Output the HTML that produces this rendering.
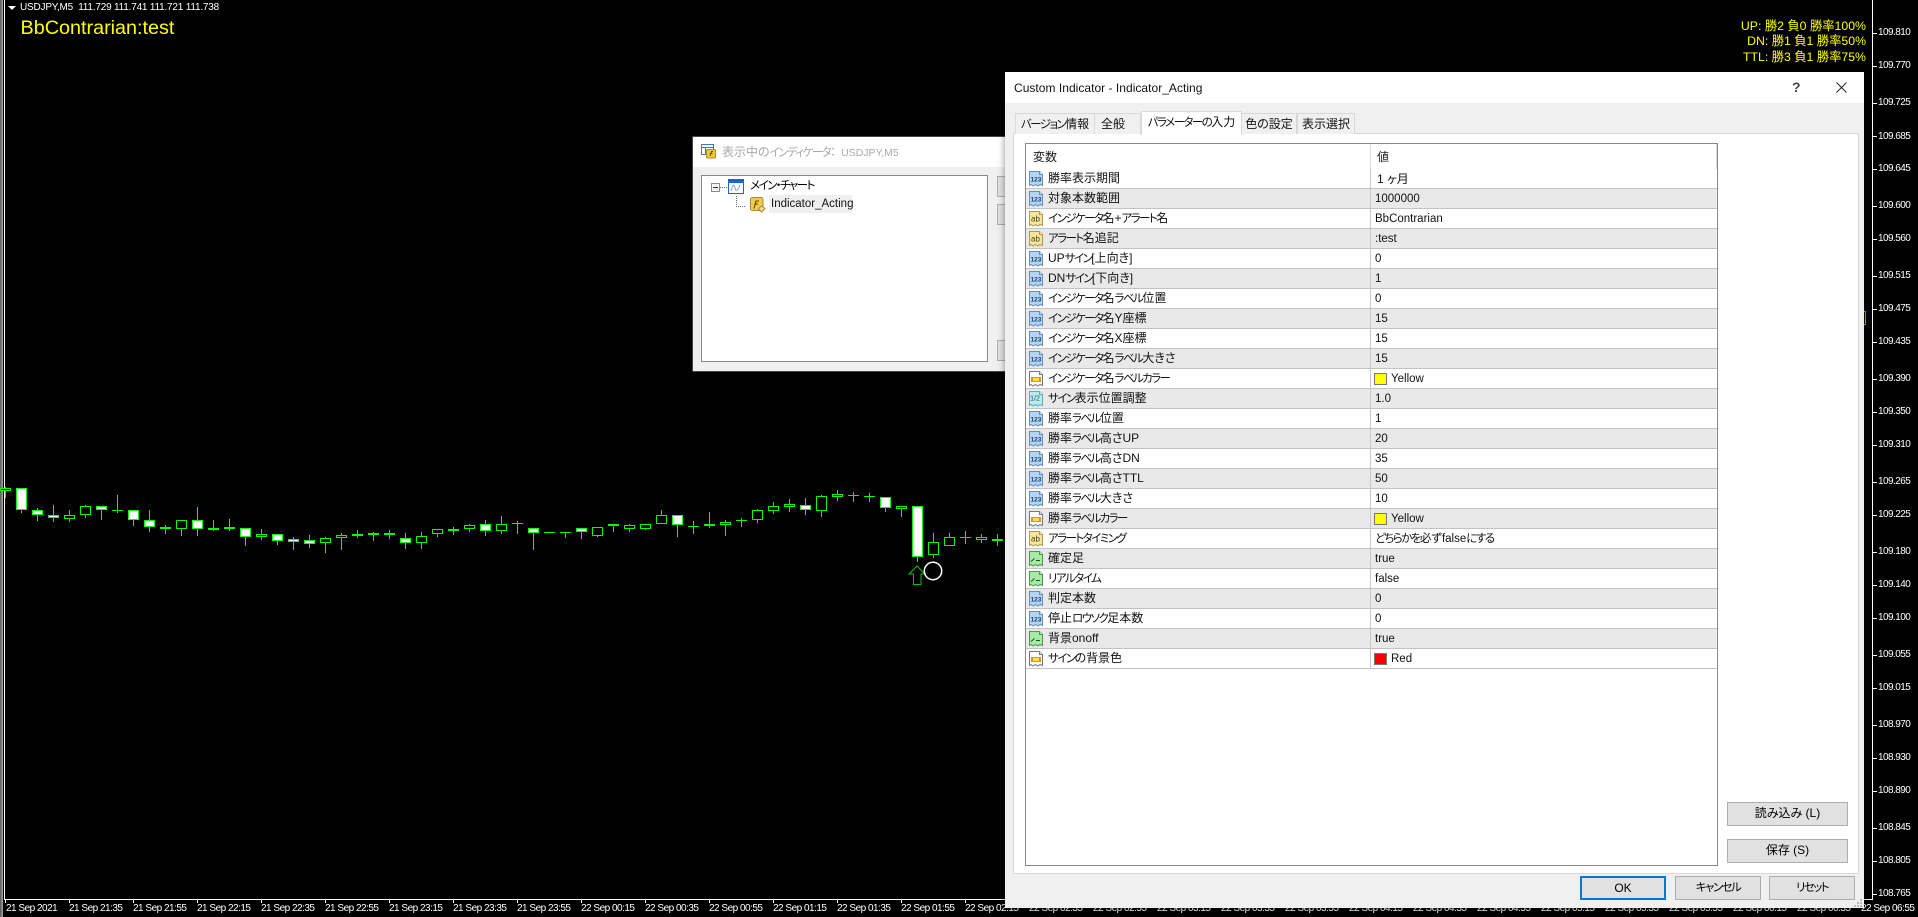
<!DOCTYPE html>
<html lang="ja"><head><meta charset="utf-8"><title>Custom Indicator</title>
<style>
*{box-sizing:border-box}
html,body{margin:0;padding:0;width:1918px;height:917px;overflow:hidden;background:#000}
body{position:relative;font-family:"Liberation Sans","Noto Sans CJK JP",sans-serif;font-feature-settings:"palt";font-size:12px;color:#000}
em{font-style:normal;font-size:11.5px;letter-spacing:-1.54px}
.a{position:absolute;white-space:nowrap}
.p{position:absolute;left:1878px;color:#fff;font-size:10px;line-height:12px;letter-spacing:-.55px;white-space:nowrap}
.t{position:absolute;top:903px;color:#fff;font-size:10px;line-height:12px;letter-spacing:-.5px;white-space:nowrap}
.tab{position:absolute;top:113px;height:21px;line-height:20px;text-align:center;background:#f0f0f0;border:1px solid #d9d9d9;border-bottom:0;color:#111;white-space:nowrap}
.btn{position:absolute;background:#e1e1e1;border:1px solid #adadad;text-align:center;color:#000;line-height:21px;white-space:nowrap}
.r{position:relative;height:20px;border-bottom:1px solid #c2c2c2;background:#fff;line-height:19px;width:691px}
.r.g{background:#e9e9e9}
.r svg{position:absolute;left:2px;top:2px;width:16px;height:16px}
.r b{position:absolute;left:22px;top:0;font-weight:400;color:#111;white-space:nowrap}
.r i{position:absolute;left:349px;top:1px;font-style:normal;font-size:11.5px;color:#111;white-space:nowrap}
.r u{position:absolute;left:348px;top:4px;width:13px;height:12px;border:1px solid #777}
.r i.c{left:365px}
.r::after{content:"";position:absolute;left:344px;top:0;width:1px;height:19px;background:#c8c8c8}
</style></head><body>

<svg width="0" height="0" style="position:absolute"><defs>
<symbol id="b" viewBox="0 0 16 16"><path d="M1.5.5H11.5L14.5 3.5V14.5L12 13.5 10 15 7.5 13.5 5 15 3 13.5 1.5 14.5Z" fill="#b7d5f2" stroke="#5f8fbf"/><path d="M11.5.5V3.5H14.5" fill="#e5f1fb" stroke="#5f8fbf"/><text x="8" y="10.5" font-size="6.5" font-weight="700" text-anchor="middle" fill="#17406d" font-family="Liberation Sans">123</text></symbol>
<symbol id="y" viewBox="0 0 16 16"><path d="M1.5.5H11.5L14.5 3.5V14.5L12 13.5 10 15 7.5 13.5 5 15 3 13.5 1.5 14.5Z" fill="#f3e6a0" stroke="#b09a4a"/><path d="M11.5.5V3.5H14.5" fill="#fbf5d2" stroke="#b09a4a"/><text x="7.5" y="10.5" font-size="8" text-anchor="middle" fill="#4a3c08" font-family="Liberation Sans">ab</text></symbol>
<symbol id="l" viewBox="0 0 16 16"><path d="M1.5.5H11.5L14.5 3.5V14.5L12 13.5 10 15 7.5 13.5 5 15 3 13.5 1.5 14.5Z" fill="#a9e9a9" stroke="#4a9a4a"/><path d="M11.5.5V3.5H14.5" fill="#dcf7dc" stroke="#4a9a4a"/><path d="M3 10.5 6.5 7.5M8 9.5H12" stroke="#115c11" fill="none"/></symbol>
<symbol id="o" viewBox="0 0 16 16"><path d="M1.5.5H11.5L14.5 3.5V14.5L12 13.5 10 15 7.5 13.5 5 15 3 13.5 1.5 14.5Z" fill="#fff" stroke="#777"/><path d="M11.5.5V3.5H14.5" fill="#eee" stroke="#777"/><rect x="3" y="6" width="10" height="5" fill="#f78a12"/><rect x="5" y="7" width="6" height="3" fill="#ffe23c"/></symbol>
<symbol id="h" viewBox="0 0 16 16"><path d="M1.5.5H11.5L14.5 3.5V14.5L12 13.5 10 15 7.5 13.5 5 15 3 13.5 1.5 14.5Z" fill="#b9ecec" stroke="#58aeb8"/><path d="M11.5.5V3.5H14.5" fill="#e3fafa" stroke="#58aeb8"/><text x="7" y="9.5" font-size="7" text-anchor="middle" fill="#17505a" font-family="Liberation Sans">1/2</text></symbol>
</defs></svg>

<!-- chart frame -->
<div class="a" style="left:0;top:0;width:3px;height:917px;background:linear-gradient(90deg,#555,#aaa)"></div>
<div class="a" style="left:4px;top:0;width:1px;height:900px;background:#fff"></div>
<div class="a" style="left:4px;top:899px;width:1869px;height:1px;background:#fff"></div>
<div class="a" style="left:1872px;top:0;width:1px;height:900px;background:#fff"></div>

<!-- chart header -->
<svg class="a" style="left:8px;top:6px" width="8" height="4"><path d="M0 0H8L4 4Z" fill="#fff"/></svg>
<div class="a" style="left:20px;top:2px;color:#fff;font-size:10px;line-height:12px;letter-spacing:-.2px">USDJPY,M5 &nbsp;111.729 111.741 111.721 111.738</div>
<div class="a" style="left:20.5px;top:16px;color:#ff0;font-size:19.8px;line-height:24px;font-feature-settings:normal">BbContrarian:test</div>

<div class="a" style="right:52px;top:19px;color:#ff0;font-size:12.3px;line-height:15.3px;text-align:right">UP: 勝2 負0 勝率100%<br>DN: 勝1 負1 勝率50%<br>TTL: 勝3 負1 勝率75%</div>

<!-- candles -->
<svg class="a" style="left:0;top:0;shape-rendering:crispEdges" width="1918" height="917" viewBox="0 0 1918 917">
<g stroke="#0f0" fill="none">
<path d="M5.5 487V498M21.5 488V513M37.5 508V521M53.5 505V522M69.5 510V522M85.5 505V518M101.5 506V520M117.5 495V513M133.5 510V526M149.5 510V532M165.5 525V534M181.5 520V536M197.5 507V536M213.5 520V531M229.5 519V531M245.5 528V546M261.5 529V540M277.5 534V545M293.5 537V550M309.5 535V548M325.5 537V553M341.5 533V550M357.5 530V538M373.5 532V541M389.5 530V539M405.5 533V549M421.5 532V549M437.5 529V537M453.5 527V535M469.5 524V532M485.5 520V536M501.5 516V534M517.5 521V534M533.5 528V550M565.5 532V538M581.5 528V539M597.5 527V537M613.5 524V532M629.5 524V532M645.5 524V530M661.5 510V524M677.5 515V537M693.5 521V534M709.5 512V528M725.5 520V536M741.5 518V527M757.5 509V523M773.5 502V514M789.5 499V512M805.5 498V515M821.5 495V517M837.5 490V501M853.5 492V502M869.5 493V502M885.5 497V512M901.5 506V517M917.5 506V562M933.5 533V558M949.5 533V540M965.5 531V544M981.5 534V543M997.5 534V546"/>
<path d="M112 510.5h11M512 523.5h11M544 532.5h11M560 532.5h11M688 526.5h11M736 520.5h11M848 495.5h11M864 496.5h11M960 537.5h11"/>
<path fill="#000" d="M.5 488.5h10v2h-10zM64.5 515.5h10v3h-10zM80.5 506.5h10v8h-10zM176.5 520.5h10v8h-10zM256.5 534.5h10v2h-10zM320.5 538.5h10v4h-10zM336.5 535.5h10v2h-10zM416.5 536.5h10v6h-10zM432.5 529.5h10v4h-10zM464.5 525.5h10v3h-10zM496.5 524.5h10v6h-10zM592.5 527.5h10v8h-10zM624.5 525.5h10v3h-10zM640.5 524.5h10v4h-10zM656.5 515.5h10v8h-10zM720.5 522.5h10v2h-10zM752.5 510.5h10v9h-10zM768.5 506.5h10v4h-10zM784.5 504.5h10v2h-10zM816.5 496.5h10v14h-10zM832.5 494.5h10v2h-10zM896.5 506.5h10v2h-10zM928.5 542.5h10v12h-10zM944.5 537.5h10v8h-10zM976.5 537.5h10v2h-10z"/>
<path fill="#fff" d="M16.5 488.5h10v21h-10zM32.5 510.5h10v4h-10zM48.5 515.5h10v2h-10zM96.5 506.5h10v3h-10zM128.5 510.5h10v9h-10zM144.5 520.5h10v6h-10zM192.5 520.5h10v8h-10zM240.5 528.5h10v8h-10zM272.5 534.5h10v6h-10zM288.5 539.5h10v2h-10zM304.5 540.5h10v3h-10zM400.5 538.5h10v4h-10zM480.5 524.5h10v6h-10zM528.5 528.5h10v4h-10zM576.5 528.5h10v3h-10zM672.5 515.5h10v9h-10zM800.5 505.5h10v4h-10zM880.5 497.5h10v10h-10zM912.5 506.5h10v50h-10z"/>
<path fill="#0f0" d="M160.5 527.5h10v1h-10zM208.5 528.5h10v1h-10zM224.5 527.5h10v1h-10zM352.5 534.5h10v1h-10zM368.5 533.5h10v1h-10zM384.5 533.5h10v1h-10zM448.5 529.5h10v1h-10zM608.5 524.5h10v1h-10zM704.5 524.5h10v1h-10zM992.5 539.5h10v1h-10z"/>
<path fill="#000" d="M1860.5 311.5h5v13h-5z"/>
</g>
</svg>
<svg class="a" style="left:905px;top:560px" width="42" height="30" viewBox="905 560 42 30">
<path d="M917 566 909 574H913.5V584.5H921V574H925Z" fill="#000" stroke="#00c400" stroke-width="1"/>
<circle cx="933" cy="571" r="8.7" fill="none" stroke="#fff" stroke-width="1.5"/>
</svg>

<!-- price scale -->
<svg class="a" style="left:1873px;top:0;shape-rendering:crispEdges" width="5" height="900"><path stroke="#fff" d="M0 33.5h4M0 66.5h4M0 103.5h4M0 136.5h4M0 169.5h4M0 206.5h4M0 239.5h4M0 276.5h4M0 309.5h4M0 342.5h4M0 379.5h4M0 412.5h4M0 445.5h4M0 482.5h4M0 515.5h4M0 552.5h4M0 585.5h4M0 618.5h4M0 655.5h4M0 688.5h4M0 725.5h4M0 758.5h4M0 791.5h4M0 828.5h4M0 861.5h4M0 894.5h4"/></svg>
<div class="p" style="top:27px">109.810</div><div class="p" style="top:60px">109.770</div><div class="p" style="top:97px">109.725</div><div class="p" style="top:131px">109.685</div><div class="p" style="top:163px">109.645</div><div class="p" style="top:200px">109.600</div><div class="p" style="top:233px">109.560</div><div class="p" style="top:270px">109.515</div><div class="p" style="top:303px">109.475</div><div class="p" style="top:336px">109.435</div><div class="p" style="top:373px">109.390</div><div class="p" style="top:406px">109.350</div><div class="p" style="top:439px">109.310</div><div class="p" style="top:476px">109.265</div><div class="p" style="top:509px">109.225</div><div class="p" style="top:546px">109.180</div><div class="p" style="top:579px">109.140</div><div class="p" style="top:612px">109.100</div><div class="p" style="top:649px">109.055</div><div class="p" style="top:682px">109.015</div><div class="p" style="top:719px">108.970</div><div class="p" style="top:752px">108.930</div><div class="p" style="top:785px">108.890</div><div class="p" style="top:822px">108.845</div><div class="p" style="top:855px">108.805</div><div class="p" style="top:888px">108.765</div>

<!-- time scale -->
<svg class="a" style="left:0;top:900px;shape-rendering:crispEdges" width="1918" height="4"><path stroke="#fff" d="M5.5 0v3M69.5 0v3M133.5 0v3M197.5 0v3M261.5 0v3M325.5 0v3M389.5 0v3M453.5 0v3M517.5 0v3M581.5 0v3M645.5 0v3M709.5 0v3M773.5 0v3M837.5 0v3M901.5 0v3M965.5 0v3"/></svg>
<div class="t" style="left:6px">21 Sep 2021</div><div class="t" style="left:69px">21 Sep 21:35</div><div class="t" style="left:133px">21 Sep 21:55</div><div class="t" style="left:197px">21 Sep 22:15</div><div class="t" style="left:261px">21 Sep 22:35</div><div class="t" style="left:325px">21 Sep 22:55</div><div class="t" style="left:389px">21 Sep 23:15</div><div class="t" style="left:453px">21 Sep 23:35</div><div class="t" style="left:517px">21 Sep 23:55</div><div class="t" style="left:581px">22 Sep 00:15</div><div class="t" style="left:645px">22 Sep 00:35</div><div class="t" style="left:709px">22 Sep 00:55</div><div class="t" style="left:773px">22 Sep 01:15</div><div class="t" style="left:837px">22 Sep 01:35</div><div class="t" style="left:901px">22 Sep 01:55</div><div class="t" style="left:965px">22 Sep 02:15</div><div class="t" style="left:1029px">22 Sep 02:35</div><div class="t" style="left:1093px">22 Sep 02:55</div><div class="t" style="left:1157px">22 Sep 03:15</div><div class="t" style="left:1221px">22 Sep 03:35</div><div class="t" style="left:1285px">22 Sep 03:55</div><div class="t" style="left:1349px">22 Sep 04:15</div><div class="t" style="left:1413px">22 Sep 04:35</div><div class="t" style="left:1477px">22 Sep 04:55</div><div class="t" style="left:1541px">22 Sep 05:15</div><div class="t" style="left:1605px">22 Sep 05:35</div><div class="t" style="left:1669px">22 Sep 05:55</div><div class="t" style="left:1733px">22 Sep 06:15</div><div class="t" style="left:1797px">22 Sep 06:35</div><div class="t" style="left:1861px">22 Sep 06:55</div>

<!-- indicators window -->
<div class="a" style="left:692px;top:136px;width:320px;height:236px;background:#f0f0f0;border:1px solid #444">
  <div class="a" style="left:0;top:0;width:318px;height:30px;background:#fff"></div>
  <svg class="a" style="left:8px;top:7px" width="16" height="15" viewBox="0 0 16 15"><rect x=".5" y=".5" width="12" height="10" fill="#fff" stroke="#3e7bb8"/><path d="M1 3.5H12M4.5 4V10" stroke="#3e7bb8"/><rect x="5.5" y="5.5" width="9" height="8.5" rx="1" fill="#f2c63c" stroke="#b58a1e"/><path d="M9 12 10.5 7.5H12M9 9.5H11.5" stroke="#6b4a00" fill="none"/></svg>
  <div class="a" style="left:29px;top:6px;color:#a9a9a9;line-height:18px;font-size:12px">表示中の<em>インディケータ</em>：<span style="font-size:10.5px;margin-left:5px">USDJPY,M5</span></div>
  <div class="a" style="left:8px;top:38px;width:287px;height:187px;background:#fff;border:1px solid #888"></div>
  <div class="btn" style="left:304px;top:39px;width:12px;height:21px"></div>
  <div class="btn" style="left:304px;top:67px;width:12px;height:21px"></div>
  <div class="btn" style="left:304px;top:203px;width:12px;height:21px"></div>
  <svg class="a" style="left:17px;top:45px;shape-rendering:crispEdges" width="60" height="40" viewBox="0 0 60 40"><rect x="1.5" y="1.5" width="8" height="8" fill="#f4f4f4" stroke="#8a8a8a"/><path d="M3 5.5H8" stroke="#333"/><path d="M10 5.5H18M26.5 14V24.5H36" stroke="#666" stroke-dasharray="1 1" fill="none"/></svg>
  <svg class="a" style="left:35px;top:42px" width="17" height="16" viewBox="0 0 17 16"><rect x=".5" y=".5" width="15" height="14" fill="#fff" stroke="#1e62c8"/><rect x="1" y="1" width="14" height="3" fill="#1e62c8"/><path d="M3 12C5 5 6 5 7 9S10 12 12 6" stroke="#7fa0e8" fill="none"/></svg>
  <div class="a" style="left:57px;top:39px;line-height:18px;font-size:12px;color:#000"><em>メイン・チャート</em></div>
  <svg class="a" style="left:57px;top:60px" width="16" height="16" viewBox="0 0 16 16"><rect x=".5" y=".5" width="12.5" height="13" rx="2" fill="#f0ca50" stroke="#a98a30"/><path d="M4 11.5 6 4H9M4.5 7H8" stroke="#5a4200" fill="none"/><path d="M11.5 9 15 11.5 11.5 15 8.5 11.5Z" fill="#f5dd90" stroke="#a98a30"/></svg>
  <div class="a" style="left:76px;top:58px;width:83px;height:18px;background:#f0f0f0;line-height:18px;padding-left:2px;color:#111;font-size:11.5px">Indicator_Acting</div>
</div>

<!-- main dialog -->
<div class="a" style="left:1005px;top:72px;width:859px;height:836px;background:#f0f0f0;box-shadow:0 0 7px rgba(0,0,0,.45)"></div>
<div class="a" style="left:1005px;top:72px;width:859px;height:31px;background:#fff"></div>
<div class="a" style="left:1014px;top:79px;line-height:18px;font-size:12px;letter-spacing:.03px;font-feature-settings:normal;color:#111">Custom Indicator - Indicator_Acting</div>
<div class="a" style="left:1792px;top:78px;line-height:18px;font-size:14px;font-weight:700;color:#444">?</div>
<svg class="a" style="left:1836px;top:82px" width="11" height="11"><path d="M.5.5 10.5 10.5M10.5.5.5 10.5" stroke="#222" fill="none"/></svg>

<div class="a" style="left:1013px;top:133px;width:846px;height:741px;background:#fff;border:1px solid #d9d9d9"></div>
<div class="tab" style="left:1015px;width:80px"><em>バージョン</em>情報</div>
<div class="tab" style="left:1094px;width:47px;text-align:left;padding-left:6px">全般</div>
<div class="tab" style="left:1241px;width:56px">色の設定</div>
<div class="tab" style="left:1297px;width:58px">表示選択</div>
<div class="tab" style="left:1141px;top:111px;width:101px;height:24px;line-height:21px;background:#fff;z-index:2"><em>パラメーターの</em>入力</div>

<div class="a" style="left:1025px;top:143px;width:693px;height:723px;background:#fff;border:1px solid #888">
  <div class="a" style="left:7px;top:4px;line-height:18px;color:#222">変数</div>
  <div class="a" style="left:351px;top:4px;line-height:18px;color:#222">値</div>
  <div class="a" style="left:344px;top:0;width:1px;height:25px;background:#ddd"></div>
  <div class="a" style="left:690px;top:0;width:1px;height:25px;background:#ddd"></div>
  <div class="a" style="left:0;top:25px;width:691px">
<div class="r"><svg><use href="#b"/></svg><b>勝率表示期間</b><i style="left:351px;font-size:12px">1 ヶ月</i></div>
<div class="r g"><svg><use href="#b"/></svg><b>対象本数範囲</b><i>1000000</i></div>
<div class="r"><svg><use href="#y"/></svg><b><em>インジケータ</em>名+<em>アラート</em>名</b><i>BbContrarian</i></div>
<div class="r g"><svg><use href="#y"/></svg><b><em>アラート</em>名追記</b><i>:test</i></div>
<div class="r"><svg><use href="#b"/></svg><b>UP<em>サイン</em>[上向き]</b><i>0</i></div>
<div class="r g"><svg><use href="#b"/></svg><b>DN<em>サイン</em>[下向き]</b><i>1</i></div>
<div class="r"><svg><use href="#b"/></svg><b><em>インジケータ</em>名<em>ラベル</em>位置</b><i>0</i></div>
<div class="r g"><svg><use href="#b"/></svg><b><em>インジケータ</em>名Y座標</b><i>15</i></div>
<div class="r"><svg><use href="#b"/></svg><b><em>インジケータ</em>名X座標</b><i>15</i></div>
<div class="r g"><svg><use href="#b"/></svg><b><em>インジケータ</em>名<em>ラベル</em>大きさ</b><i>15</i></div>
<div class="r"><svg><use href="#o"/></svg><b><em>インジケータ</em>名<em>ラベルカラー</em></b><u style="background:#ff0"></u><i class="c">Yellow</i></div>
<div class="r g"><svg><use href="#h"/></svg><b><em>サイン</em>表示位置調整</b><i>1.0</i></div>
<div class="r"><svg><use href="#b"/></svg><b>勝率<em>ラベル</em>位置</b><i>1</i></div>
<div class="r g"><svg><use href="#b"/></svg><b>勝率<em>ラベル</em>高さUP</b><i>20</i></div>
<div class="r"><svg><use href="#b"/></svg><b>勝率<em>ラベル</em>高さDN</b><i>35</i></div>
<div class="r g"><svg><use href="#b"/></svg><b>勝率<em>ラベル</em>高さTTL</b><i>50</i></div>
<div class="r"><svg><use href="#b"/></svg><b>勝率<em>ラベル</em>大きさ</b><i>10</i></div>
<div class="r g"><svg><use href="#o"/></svg><b>勝率<em>ラベルカラー</em></b><u style="background:#ff0"></u><i class="c">Yellow</i></div>
<div class="r"><svg><use href="#y"/></svg><b><em>アラートタイミング</em></b><i><em>どちらかを</em>必ずfalse<em>にする</em></i></div>
<div class="r g"><svg><use href="#l"/></svg><b>確定足</b><i>true</i></div>
<div class="r"><svg><use href="#l"/></svg><b><em>リアルタイム</em></b><i>false</i></div>
<div class="r g"><svg><use href="#b"/></svg><b>判定本数</b><i>0</i></div>
<div class="r"><svg><use href="#b"/></svg><b>停止<em>ロウソク</em>足本数</b><i>0</i></div>
<div class="r g"><svg><use href="#l"/></svg><b>背景onoff</b><i>true</i></div>
<div class="r"><svg><use href="#o"/></svg><b><em>サイン</em>の背景色</b><u style="background:#f00"></u><i class="c">Red</i></div>
  </div>
</div>

<div class="btn" style="left:1727px;top:802px;width:121px;height:24px">読み込み (L)</div>
<div class="btn" style="left:1727px;top:839px;width:121px;height:24px">保存 (S)</div>
<div class="btn" style="left:1580px;top:876px;width:86px;height:24px;border:2px solid #0078d7;line-height:20px;font-size:12px">OK</div>
<div class="btn" style="left:1675px;top:876px;width:86px;height:24px"><em>キャンセル</em></div>
<div class="btn" style="left:1769px;top:876px;width:86px;height:24px"><em>リセット</em></div>
<svg class="a" style="left:1854px;top:899px;shape-rendering:crispEdges" width="9" height="9"><path fill="#bbb" d="M6 0h2v2H6zM3 3h2v2H3zM6 3h2v2H6zM0 6h2v2H0zM3 6h2v2H3zM6 6h2v2H6z"/></svg>

</body></html>
